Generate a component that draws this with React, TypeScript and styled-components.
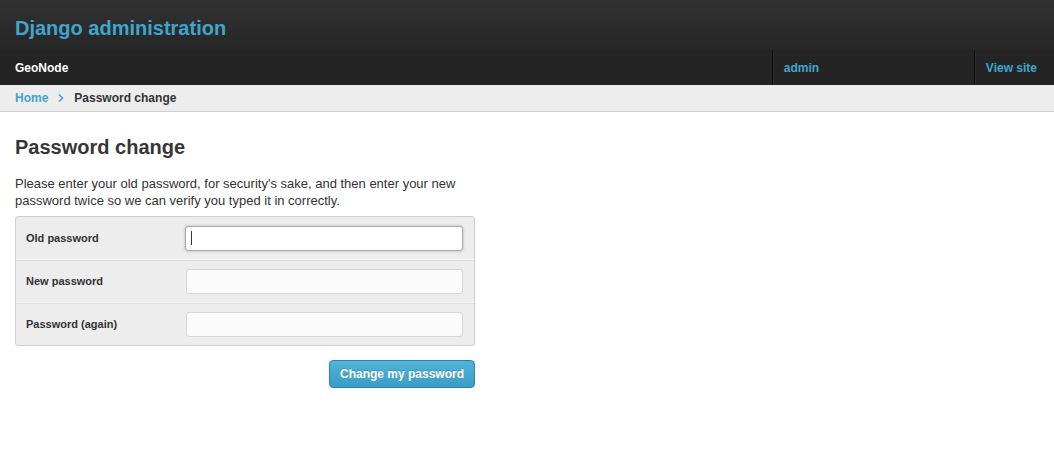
import styled, { createGlobalStyle } from "styled-components"

const GlobalStyle = createGlobalStyle`
  body {
    margin: 0;
    font-family: "Liberation Sans", Arial, sans-serif;
    background: #fff;
    color: #333;
  }
`

const Header = styled.header`
  height: 50px;
  box-sizing: border-box;
  display: flex;
  align-items: center;
  padding: 6px 15px 0;
  background: linear-gradient(to bottom, #313131, #262626);
`

const Branding = styled.h1`
  margin: 0;
  font-size: 20px;
  font-weight: 700;
  color: #41a4cd;
`

const NavBar = styled.nav`
  height: 35px;
  display: flex;
  align-items: stretch;
  background: #242424;
  padding-left: 15px;
`

const SiteName = styled.div`
  flex: 1;
  display: flex;
  align-items: center;
  font-size: 12px;
  font-weight: 700;
  color: #fff;
`

const NavItem = styled.a<{ $width?: number }>`
  display: flex;
  align-items: center;
  width: ${(p) => (p.$width ? `${p.$width}px` : "auto")};
  padding: 0 17px 0 11px;
  box-sizing: border-box;
  border-left: 1px solid #0c0c0c;
  box-shadow: inset 1px 0 0 #2e2e2e;
  font-size: 12px;
  font-weight: 700;
  color: #41a4cd;
  text-decoration: none;
`

const Breadcrumbs = styled.div`
  height: 26px;
  display: flex;
  align-items: center;
  gap: 9px;
  padding: 0 15px;
  background: #ededed;
  border-bottom: 1px solid #d0d0d0;
  font-size: 12px;
  font-weight: 700;
`

const Crumb = styled.a`
  color: #41a4cd;
  text-decoration: none;
`

const Current = styled.span`
  color: #333;
`

const Content = styled.main`
  padding: 23px 15px;
  width: 460px;
`

const Title = styled.h2`
  margin: 0 0 16px;
  font-size: 20px;
  font-weight: 700;
  color: #363636;
  line-height: 24px;
`

const Intro = styled.p`
  margin: 0 0 7px;
  font-size: 13px;
  line-height: 17px;
  color: #333;
`

const FieldBox = styled.div`
  background: #ededed;
  border: 1px solid #cfcfcf;
  border-radius: 3px;
`

const Row = styled.div`
  height: 42px;
  display: flex;
  align-items: center;
  padding: 0 11px 0 10px;
  & + & {
    border-top: 1px solid #f8f8f8;
    box-shadow: inset 0 1px 0 #dedede;
  }
`

const Label = styled.label`
  width: 160px;
  font-size: 11px;
  font-weight: 700;
  color: #333;
`

const Input = styled.input<{ $focused?: boolean }>`
  width: 278px;
  height: 25px;
  box-sizing: border-box;
  border: 1px solid ${(p) => (p.$focused ? "#aaa" : "#d6d6d6")};
  border-radius: 3px;
  background: ${(p) => (p.$focused ? "#fff" : "#fbfbfb")};
  box-shadow: ${(p) => (p.$focused ? "0 0 3px rgba(0,0,0,0.25)" : "none")};
  outline: none;
  padding: 0 6px;
  font-size: 12px;
`

const Caret = styled.span`
  display: inline-block;
  width: 1px;
  height: 14px;
  background: #333;
`

const FocusWrap = styled.div`
  position: relative;
  display: flex;
  align-items: center;
  & > ${Caret} {
    position: absolute;
    left: 6px;
  }
`

const Actions = styled.div`
  display: flex;
  justify-content: flex-end;
  margin-top: 14px;
`

const Submit = styled.button`
  width: 146px;
  height: 28px;
  border: 1px solid #2d84a8;
  border-radius: 4px;
  background: linear-gradient(to bottom, #53b3d8, #3a9dc6);
  color: #fff;
  font-family: "Liberation Sans", Arial, sans-serif;
  font-size: 12px;
  font-weight: 700;
  text-shadow: 0 -1px 0 rgba(0, 0, 0, 0.15);
  cursor: pointer;
`

export default function App() {
  return (
    <>
      <GlobalStyle />
      <Header>
        <Branding>Django administration</Branding>
      </Header>
      <NavBar>
        <SiteName>GeoNode</SiteName>
        <NavItem href="#" $width={202}>admin</NavItem>
        <NavItem href="#">View site</NavItem>
      </NavBar>
      <Breadcrumbs>
        <Crumb href="#">Home</Crumb>
        <svg width="8" height="10" viewBox="0 0 8 10">
          <path d="M2 1.5 L5.5 5 L2 8.5" fill="none" stroke="#41a4cd" strokeWidth="1.6" />
        </svg>
        <Current>Password change</Current>
      </Breadcrumbs>
      <Content>
        <Title>Password change</Title>
        <Intro>
          Please enter your old password, for security's sake, and then enter your new password twice so we can verify you typed it in correctly.
        </Intro>
        <FieldBox>
          <Row>
            <Label>Old password</Label>
            <FocusWrap>
              <Input type="password" $focused />
              <Caret />
            </FocusWrap>
          </Row>
          <Row>
            <Label>New password</Label>
            <Input type="password" />
          </Row>
          <Row>
            <Label>Password (again)</Label>
            <Input type="password" />
          </Row>
        </FieldBox>
        <Actions>
          <Submit>Change my password</Submit>
        </Actions>
      </Content>
    </>
  )
}
